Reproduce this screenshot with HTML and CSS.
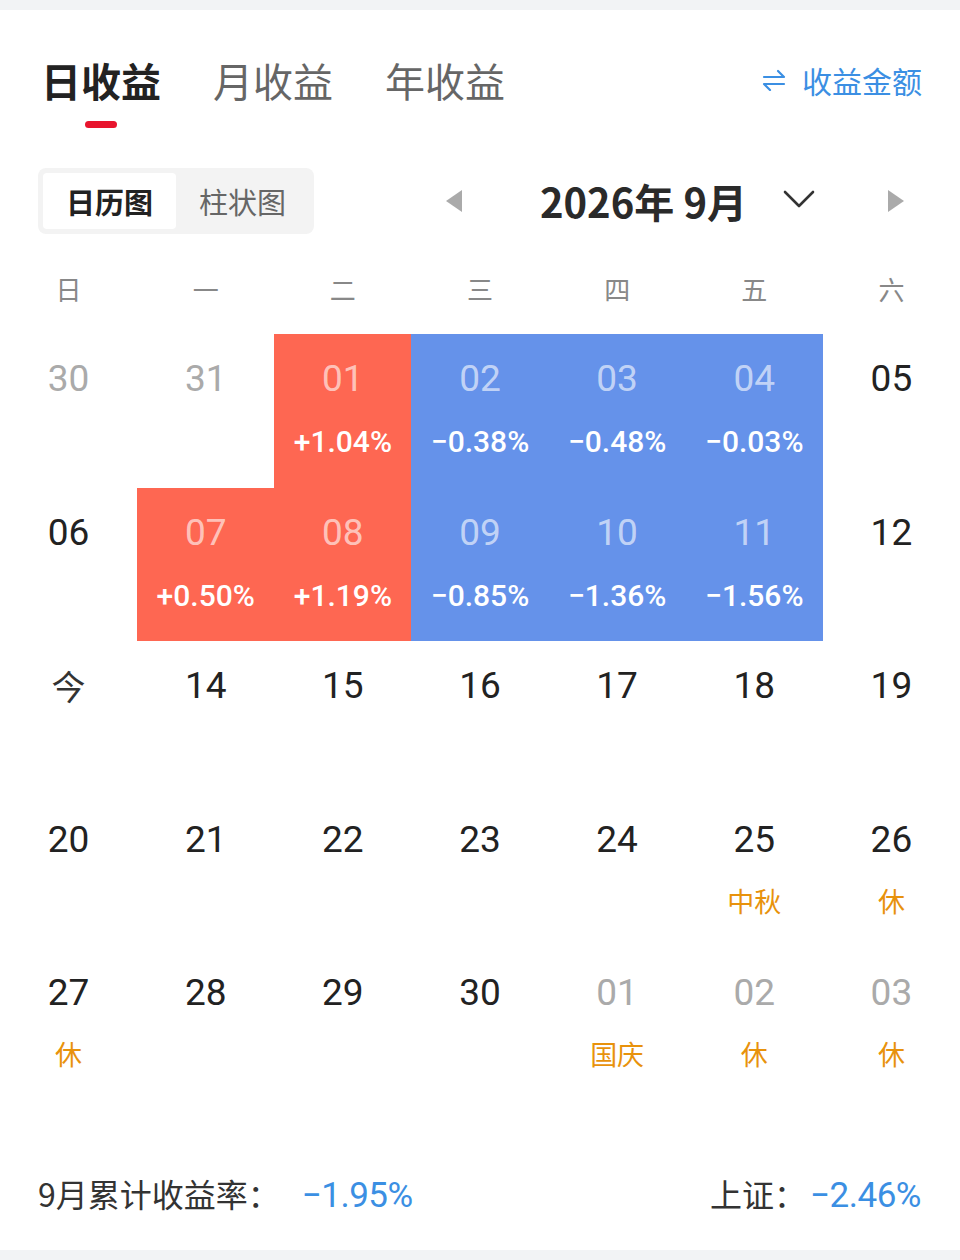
FILE: index.html
```html
<!DOCTYPE html>
<html lang="zh-CN">
<head>
    <meta charset="UTF-8">
    <meta name="viewport" content="width=device-width, initial-scale=1.0">
    <title>日收益</title>
    <link rel="stylesheet" href="styles.css">
</head>
<body>
    <div class="band"></div>

    <div class="tabs">
        <div class="tab active">日收益<span class="bar"></span></div>
        <div class="tab">月收益</div>
        <div class="tab">年收益</div>
        <div class="switch">
            <svg width="24" height="22" viewBox="0 0 24 22" fill="none" stroke="currentColor" stroke-width="2.2" stroke-linecap="round" stroke-linejoin="round">
                <path d="M2 8 H22 L16 2"/>
                <path d="M22 15 H2 L8 21"/>
            </svg>
            收益金额
        </div>
    </div>

    <div class="toolbar">
        <div class="segment">
            <div class="seg-item on">日历图</div>
            <div class="seg-item">柱状图</div>
        </div>
        <div class="month-nav">
            <svg class="arrow" width="16" height="22" viewBox="0 0 16 22"><polygon points="16,0 16,22 0,11" fill="#aaa"/></svg>
            <div class="month">2026年 9月</div>
            <svg class="chevron" width="32" height="20" viewBox="0 0 32 20" fill="none" stroke="#333" stroke-width="2.6" stroke-linecap="round" stroke-linejoin="round"><path d="M2 3 L16 17 L30 3"/></svg>
            <svg class="arrow next" width="16" height="22" viewBox="0 0 16 22"><polygon points="0,0 0,22 16,11" fill="#aaa"/></svg>
        </div>
    </div>

    <div class="weekdays">
        <span>日</span><span>一</span><span>二</span><span>三</span><span>四</span><span>五</span><span>六</span>
    </div>

    <div class="calendar">
        <!-- 第一周 -->
        <div class="day muted"><b>30</b></div>
        <div class="day muted"><b>31</b></div>
        <div class="day up"><b>01</b><i>+1.04%</i></div>
        <div class="day down"><b>02</b><i>−0.38%</i></div>
        <div class="day down"><b>03</b><i>−0.48%</i></div>
        <div class="day down"><b>04</b><i>−0.03%</i></div>
        <div class="day"><b>05</b></div>
        <!-- 第二周 -->
        <div class="day"><b>06</b></div>
        <div class="day up"><b>07</b><i>+0.50%</i></div>
        <div class="day up"><b>08</b><i>+1.19%</i></div>
        <div class="day down"><b>09</b><i>−0.85%</i></div>
        <div class="day down"><b>10</b><i>−1.36%</i></div>
        <div class="day down"><b>11</b><i>−1.56%</i></div>
        <div class="day"><b>12</b></div>
        <!-- 第三周 -->
        <div class="day today"><b>今</b></div>
        <div class="day"><b>14</b></div>
        <div class="day"><b>15</b></div>
        <div class="day"><b>16</b></div>
        <div class="day"><b>17</b></div>
        <div class="day"><b>18</b></div>
        <div class="day"><b>19</b></div>
        <!-- 第四周 -->
        <div class="day"><b>20</b></div>
        <div class="day"><b>21</b></div>
        <div class="day"><b>22</b></div>
        <div class="day"><b>23</b></div>
        <div class="day"><b>24</b></div>
        <div class="day"><b>25</b><em>中秋</em></div>
        <div class="day"><b>26</b><em>休</em></div>
        <!-- 第五周 -->
        <div class="day"><b>27</b><em>休</em></div>
        <div class="day"><b>28</b></div>
        <div class="day"><b>29</b></div>
        <div class="day"><b>30</b></div>
        <div class="day muted"><b>01</b><em>国庆</em></div>
        <div class="day muted"><b>02</b><em>休</em></div>
        <div class="day muted"><b>03</b><em>休</em></div>
    </div>

    <div class="summary">
        <div class="stat">9月累计收益率：<span class="val">−1.95%</span></div>
        <div class="stat">上证：<span class="val tight">−2.46%</span></div>
    </div>

    <div class="band"></div>
</body>
</html>
```

FILE: styles.css
```css
body {
    margin: 0;
    width: 960px;
    height: 1260px;
    background: white;
    font-family: 'Noto Sans CJK SC', 'Noto Sans', sans-serif;
    color: #222;
    overflow: hidden;
}

.band {
    height: 10px;
    background: #f2f3f5;
}

/* 顶部标签 */
.tabs {
    display: flex;
    align-items: flex-start;
    gap: 52px;
    padding: 50px 38px 0 41px;
    height: 108px;
}

.tab {
    display: flex;
    flex-direction: column;
    align-items: center;
    font-size: 40px;
    line-height: 40px;
    color: #666;
}

.tab.active {
    color: #222;
    font-weight: 700;
}

.tab .bar {
    width: 32px;
    height: 7px;
    margin-top: 21px;
    border-radius: 4px;
    background: #e8142d;
}

.switch {
    margin-left: auto;
    display: flex;
    align-items: center;
    gap: 16px;
    font-size: 30px;
    line-height: 40px;
    color: #3b8fe3;
}

/* 工具栏 */
.toolbar {
    display: flex;
    align-items: center;
    padding: 0 56px 0 38px;
    height: 66px;
}

.segment {
    display: flex;
    padding: 5px;
    background: #f3f3f3;
    border-radius: 8px;
}

.seg-item {
    width: 133px;
    height: 56px;
    line-height: 56px;
    text-align: center;
    font-size: 29px;
    color: #666;
    border-radius: 4px;
}

.seg-item.on {
    background: white;
    color: #222;
    font-weight: 700;
}

.month-nav {
    margin-left: auto;
    display: flex;
    align-items: center;
}

.month {
    margin-left: 78px;
    font-size: 40px;
    font-weight: 700;
    color: #2a2a2a;
    line-height: 50px;
}

.chevron {
    margin-left: 36px;
    margin-top: -4px;
}

.arrow.next {
    margin-left: 73px;
}

/* 星期 */
.weekdays {
    display: grid;
    grid-template-columns: repeat(7, 1fr);
    margin-top: 25px;
    margin-bottom: 15px;
    line-height: 60px;
    font-size: 26px;
    color: #888;
    text-align: center;
}

/* 日历 */
.calendar {
    display: grid;
    grid-template-columns: repeat(7, 1fr);
    grid-auto-rows: 153.6px;
}

.day {
    display: flex;
    flex-direction: column;
    align-items: center;
    padding-top: 23px;
}

.day b {
    font-family: Roboto, 'Noto Sans CJK SC', sans-serif;
    font-weight: 400;
    font-size: 37px;
    line-height: 44px;
    color: #222;
}

.day i {
    font-style: normal;
    font-family: Roboto, sans-serif;
    font-weight: 500;
    font-size: 30px;
    line-height: 36px;
    margin-top: 23px;
    color: white;
}

.day em {
    font-style: normal;
    font-size: 27px;
    line-height: 34px;
    margin-top: 22px;
    color: #e8920c;
}

.day.muted b {
    color: #aaa;
}

.day.today b {
    font-family: 'Noto Sans CJK SC', sans-serif;
    font-size: 34px;
    color: #333;
}

.day.up {
    background: #fe6752;
}

.day.down {
    background: #6592ea;
}

.day.up b,
.day.down b {
    color: rgba(255, 255, 255, 0.62);
}

/* 底部统计 */
.summary {
    display: flex;
    justify-content: space-between;
    align-items: center;
    margin: 66px 0 32px;
    padding: 0 39px 0 38px;
    height: 50px;
}

.stat {
    font-size: 32px;
    color: #333;
    display: flex;
    align-items: baseline;
}

.val {
    margin-left: 22px;
    font-family: Roboto, sans-serif;
    font-size: 35px;
    color: #3b8fe3;
    letter-spacing: -0.5px;
}

.val.tight {
    margin-left: 4px;
}
```
